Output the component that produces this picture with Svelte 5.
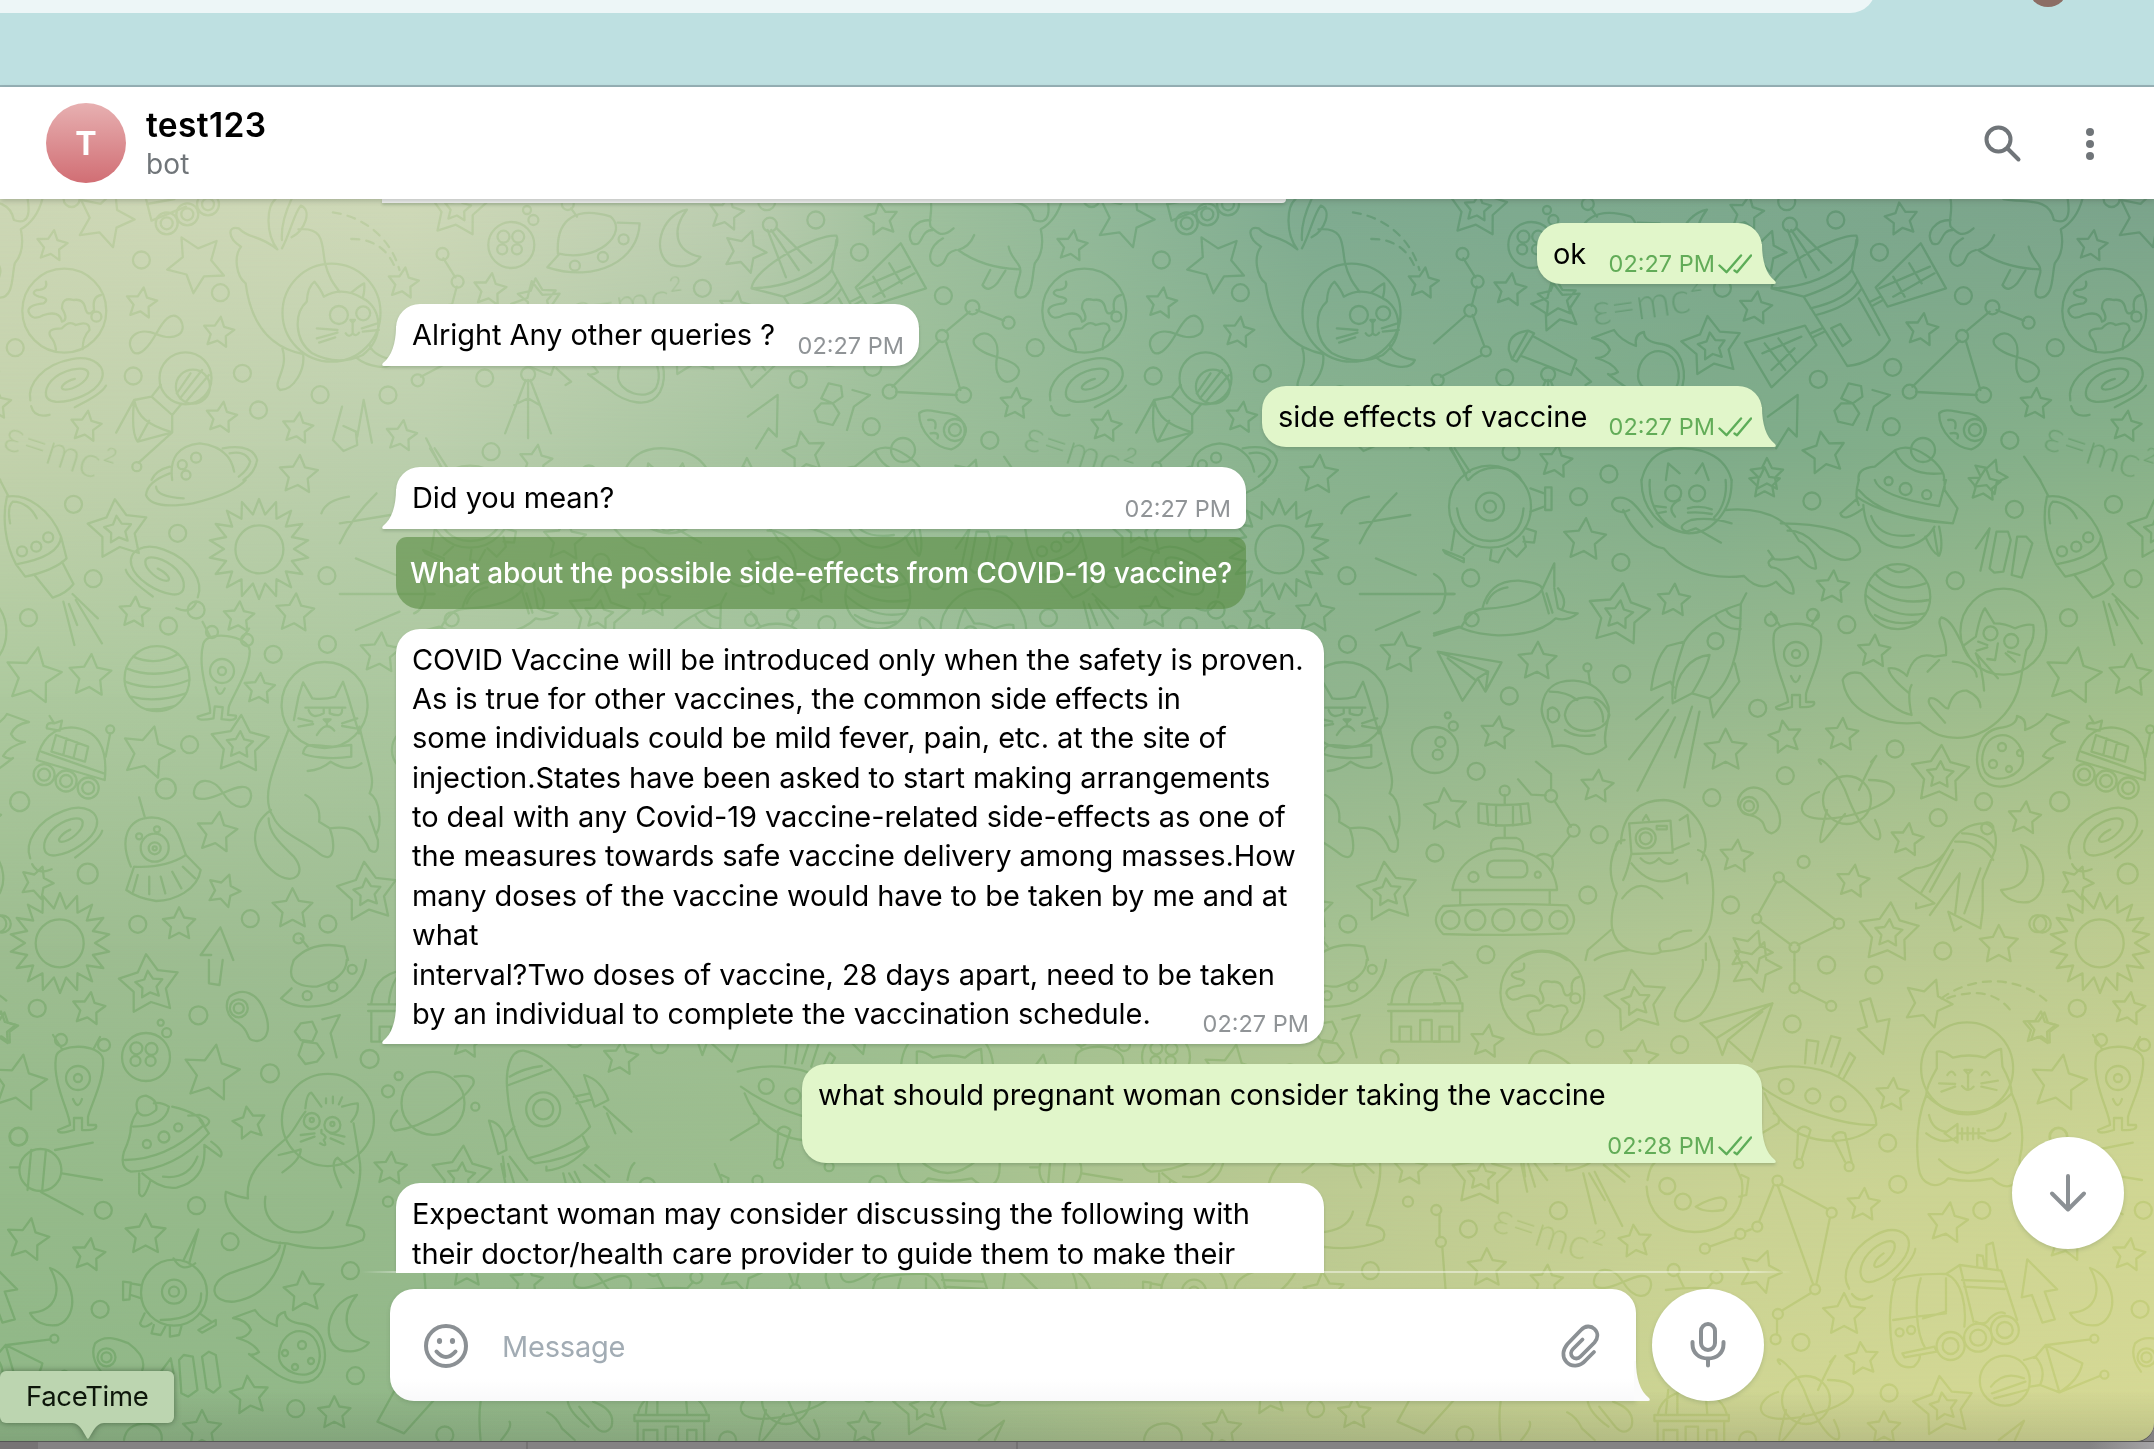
<script lang="ts">
  type Message = {
    kind: 'in' | 'out';
    size: string;
    time: string;
    lines: string[];
    action?: string;
    clipped?: boolean;
  };

  const messages: Message[] = [
    { kind: 'out', size: 'w-ok', time: '02:27 PM', lines: ['ok'] },
    { kind: 'in', size: 'w-alright', time: '02:27 PM', lines: ['Alright Any other queries ?'] },
    { kind: 'out', size: 'w-side', time: '02:27 PM', lines: ['side effects of vaccine'] },
    {
      kind: 'in',
      size: 'w-mean',
      time: '02:27 PM',
      lines: ['Did you mean?'],
      action: 'What about the possible side-effects from COVID-19 vaccine?'
    },
    {
      kind: 'in',
      size: 'w-wide',
      time: '02:27 PM',
      lines: [
        'COVID Vaccine will be introduced only when the safety is proven.',
        'As is true for other vaccines, the common side effects in',
        'some individuals could be mild fever, pain, etc. at the site of',
        'injection.States have been asked to start making arrangements',
        'to deal with any Covid-19 vaccine-related side-effects as one of',
        'the measures towards safe vaccine delivery among masses.How',
        'many doses of the vaccine would have to be taken by me and at',
        'what',
        'interval?Two doses of vaccine, 28 days apart, need to be taken',
        'by an individual to complete the vaccination schedule.'
      ]
    },
    { kind: 'out', size: 'w-pregnant', time: '02:28 PM', lines: ['what should pregnant woman consider taking the vaccine'] },
    {
      kind: 'in',
      size: 'w-wide',
      time: '',
      clipped: true,
      lines: [
        'Expectant woman may consider discussing the following with',
        'their doctor/health care provider to guide them to make their'
      ]
    }
  ];

  // ---- Wallpaper doodles: one tile, repeated every TILE pixels ----
  const TILE = 1020;
  const SX = 720 / 1568;
  const SY = 1 / 3;

  type Sheet = {
    x: number;
    y: number;
    circles: number[][];
    stars: number[][];
    doubles: number[][];
    paths: string;
    dashed?: string;
  };

  const sheets: Sheet[] = [
    {
      x: 0, y: 0,
      circles: [[156,597,8],[308,780],[480,878],[33,1043],[290,1128],[528,1120],[697,1184],[845,1185],[563,1230],[140,932,42],[210,950,5],[722,938,49],[738,945,9],[791,940,7],[363,670,11],[363,670,6],[408,643,11],[408,643,6],[453,613,11],[453,613,6],[404,1135,26],[420,1160,17],[298,1400,4.5],[1150,1123,7],[1252,797,5],[1313,771,5],[1358,718,5],[427,1373,5],[397,1394,4.5],[405,1425,4.5]],
      stars: [[113,738,16,8],[308,910,16,8],[476,998,16,8],[187,1280,16,8],[482,1253,16,8],[648,1285,16,8],[878,850,16,8],[874,1308,16,8],[650,1425,20,4],[228,655,30,20],[428,790,30,-30],[1170,895,20,-5]],
      doubles: [],
      paths: 'M318 597L330 662L405 620M320 612L380 597M600 597C580 620 578 700 604 748C560 700 545 720 520 685C495 675 495 715 525 740C508 770 515 830 535 850C545 960 580 1040 660 1062M655 617C640 640 632 700 614 745M655 617C680 630 665 690 635 712M635 597C620 640 612 680 614 720M650 688C710 680 700 740 708 790C715 830 725 850 740 876M615 1045C630 1110 590 1150 610 1170C640 1170 665 1110 660 1062M775 1072C800 1100 850 1115 860 1080C835 1075 810 1060 805 1035M668 905Q670 860 685 845Q700 870 705 890M765 878Q785 855 793 850Q795 870 790 895M668 905C640 940 640 1020 680 1060C720 1090 760 1085 790 1065C840 1010 830 920 790 895C760 870 730 870 705 890M763 960H773L768 968ZM768 968V1000Q760 1015 753 1000M768 1000Q775 1012 782 998M690 985L735 990M690 1015L735 998M695 1028L730 1012M788 985L822 970M790 995L825 990M350 1155L330 1190L292 1200L253 1298M395 1212L375 1245M330 1190L375 1245V1297L300 1325Q285 1300 292 1200M292 1200C300 1250 320 1275 375 1297M300 1325L325 1262M375 1297L302 1388M385 1180L415 1120M392 1195L440 1110M405 1205L455 1125M375 1440Q365 1340 435 1330Q500 1340 510 1415M330 1440Q340 1410 370 1400M485 1345Q550 1330 560 1380Q555 1420 530 1440M500 1360Q535 1350 545 1385Q540 1410 520 1430M745 1220L725 1320L748 1353L778 1335L775 1295L748 1278M792 1200L778 1310M792 1200L810 1328M928 1315L975 1440M1145 1140L1100 1300M1150 1140V1315M1155 1140L1200 1300M1120 1215L1150 1195L1175 1215M1215 760C1210 650 1260 620 1330 650C1370 700 1300 790 1215 760ZM1345 668L1393 670C1390 780 1300 850 1192 802L1218 762',
      dashed: 'M725 637C790 650 850 710 870 810M765 717C820 715 850 760 862 810'
    },
    {
      x: 0, y: 480,
      circles: [[160,73],[387,160],[203,296],[62,413],[427,390],[367,438],[712,287],[713,493],[595,523],[413,794],[361,926,10],[43,965,9.5],[191,1181,10],[300,1333],[545,1316],[714,1332],[5,1332],[565,208,24],[342,596,32.5],[105,172,5],[79,200,5],[48,214,5],[707,675,43],[240,748,4],[96,884,10.5],[96,884,6],[144,903,10.5],[144,903,6],[192,924,10.5],[192,924,6],[337,1103,14],[337,1105,6],[337,1105,2],[342,1048,3],[303,1069,3],[130,1390,24],[650,1375,5]],
      stars: [[293,398,16,4],[520,412,16,4],[642,400,20,4],[565,627,16,4],[72,588,29,10],[196,588,22,4],[322,818,27,14],[472,1058,21,8],[80,1208,17,20],[487,1232,17,20],[390,1333,17,0],[637,1288,21,0],[828,520,21,4]],
      doubles: [[257,150,31,-6],[522,795,30,3],[800,1238,31,-6]],
      paths: 'M15 50C60 40 110 90 133 170Q130 230 35 253C10 190 5 110 15 50ZM22 130Q15 80 28 65C50 65 70 85 80 115M0 0L18 48M133 170L145 235Q120 270 55 290L35 253M75 285L115 353Q145 340 160 312L135 245M138 365L162 495M165 360L222 490M150 372L168 435M158 342L213 415M290 530Q340 560 388 522M275 565Q340 600 408 560M272 605Q340 640 412 600M285 650Q340 670 405 640M320 688Q350 690 380 678M628 750C600 850 565 950 595 1010C610 1060 660 1080 690 1115Q720 1150 725 1110C728 1080 722 1060 718 1045C770 1035 790 1060 805 1110Q825 1130 823 1080L805 1010M783 740C800 850 820 900 805 940C830 960 830 1040 820 1060M665 945Q700 970 695 1025L718 1045M590 990C540 1040 545 1120 600 1180C640 1220 670 1180 640 1130C610 1090 585 1060 585 1015M640 720L650 650L660 607L680 655Q705 660 730 650L747 605L758 650L782 760M665 683H752M672 690Q680 720 705 700V685M718 685V700Q745 715 745 690M690 765Q710 720 728 752M712 720V735M705 718H720L712 728ZM650 715L680 725M650 740L682 732M745 730L778 715M745 738L775 745M660 820C665 780 690 800 730 800L765 795V830C720 840 670 830 660 820M670 873Q700 870 720 845Q760 880 787 850M80 840Q95 745 155 742Q240 750 228 900ZM90 815L226 880M122 765L192 800L185 845L112 815ZM145 775L138 825M168 787L160 835M108 708L118 730Q100 725 102 745L130 752L135 722L118 730M230 830L240 760M285 1160C260 1080 275 1015 330 1012C390 1015 390 1080 405 1125L437 1170C430 1230 380 1262 340 1263Q300 1255 275 1230L292 1160Q360 1165 405 1125M315 1010L303 952M300 1185L290 1235M325 1190V1243M350 1190L360 1240M375 1175L395 1225M398 1160L425 1195M437 1425L480 1342L508 1440M437 1425H460M640 1440Q680 1380 750 1400L758 1440M318 45C320 10 350 -10 370 -20M318 45Q330 90 420 70Q510 40 535 0M340 20Q340 50 400 55M740 190C760 130 790 80 820 40M700 100Q710 60 760 50M740 130L850 105M775 235L862 285M740 342H945M775 450L870 395M655 1375L670 1400'
    },
    {
      x: 0, y: 960,
      circles: [[81,145],[432,166,9],[588,340,9],[805,297,9],[40,530,9],[225,751],[428,737],[501,845],[218,1048],[763,932],[774,1247],[644,1346],[350,188,3],[363,218,4.5],[845,394,6],[868,348,4],[1035,440,4],[845,725,5],[318,291,24],[297,265,6],[330,267,6],[295,303,5],[328,303,5],[520,145,9],[520,145,5],[669,107,4.5],[725,80,4.5],[767,28,4.5],[320,552,4],[357,531,5.5],[388,502,4],[88,630,21],[714,480,46],[679,483,8],[679,480,2],[724,495,8],[724,492,2],[943,430,31.5],[1183,448,17],[1183,448,10],[379,998,33],[379,995,12],[379,995,5],[232,1192,9],[232,1192,5]],
      stars: [[193,147,17,8],[5,205,16,8],[40,370,29,10],[460,340,29,10],[543,490,17,-10],[850,627,17,4],[60,840,22,10],[317,825,21,0],[193,885,17,8],[662,997,21,-4],[543,1307,20,-6],[728,1360,17,0],[440,1410,20,0]],
      doubles: [[325,75,31,-6]],
      paths: 'M455 0V70L478 75L485 0M655 190L680 185L690 215L680 245L655 240L642 215ZM660 245L690 250L705 280L690 305L665 312L650 285ZM702 178L740 165L720 220L733 292M500 110C530 80 560 100 575 150C590 200 585 240 560 243C530 240 550 220 520 190C490 170 490 130 500 110ZM640 0C625 50 635 80 690 80C740 60 755 30 755 0M635 85L612 115Q650 155 720 130Q790 90 797 0M270 575C280 545 285 520 285 500Q290 470 300 455M375 440Q440 460 445 500Q470 480 435 465L410 467M270 575Q260 625 285 635Q380 630 455 520L435 480M272 600Q360 600 440 500M290 500Q360 500 368 440Q350 425 335 430M300 455Q290 410 318 407Q345 420 340 450Q315 480 300 455M310 640Q350 690 385 683Q450 660 445 560M355 650Q410 660 430 590M303 640V700Q312 730 328 660M445 555L480 590Q490 575 460 545M68 570L60 690M100 570L92 690M22 622H40M120 570L202 548M135 640L222 660M90 697L180 763M665 455C640 500 640 520 615 545C560 610 535 650 540 715Q515 710 492 695C485 740 510 780 540 810C580 850 610 850 625 850C680 870 740 870 790 840Q805 800 755 795C775 720 790 650 783 600L770 490M610 848C610 900 560 910 500 940C450 970 460 1030 510 1025C580 1010 610 930 622 850M578 710C570 780 610 820 655 817Q715 810 725 755M607 585Q640 575 655 568Q655 600 615 637M770 638Q740 600 735 593Q715 610 743 682M665 445Q668 400 678 398L700 440M745 440Q770 430 779 430Q782 460 765 485M710 430V415M725 430V410M738 433L745 412M700 510V520Q715 530 705 540Q715 565 697 550M655 525L685 520M655 545L685 530M750 530L720 520M748 552L720 535M990 350Q1040 340 1030 375C1010 420 930 500 860 512Q840 490 865 452M1105 395C1100 330 1110 270 1140 272C1200 290 1250 380 1285 500Q1250 560 1150 595C1120 530 1108 450 1105 395M1108 375L1200 328M1110 350Q1140 325 1180 318M1250 410L1285 400M1272 345Q1310 360 1325 420L1295 440ZM1255 430L1290 418M1100 530L1120 500M1065 482Q1100 490 1103 570L1085 582ZM1150 595L1165 610Q1230 600 1280 560L1270 530M1190 620V632Q1240 625 1282 560M1315 440L1375 515M1322 460L1340 520M1095 590L1100 650M1110 590L1148 660M400 900L432 808L412 910M378 895Q395 940 425 910M305 975L285 970M308 1015L285 1005M268 965L285 968L282 1018L268 1020ZM315 1060L305 1090Q310 1110 330 1090M335 1095L330 1120L350 1125L360 1100M370 1100V1130L390 1125L395 1100M435 1060L460 1085M432 1110L470 1080V1095L440 1118ZM350 1080Q440 1080 438 1000M207 1150C230 1120 260 1140 280 1150Q320 1190 310 1230M207 1150Q195 1190 220 1235M390 1200L400 1185L420 1190L430 1290L410 1310L395 1300ZM440 1190L455 1175L470 1185L480 1280L465 1298L450 1285ZM345 1245L372 1195L378 1240M860 1290L822 1385L880 1420L945 1320M270 1440Q275 1390 320 1390Q355 1400 352 1440'
    },
    {
      x: 414, y: 0,
      circles: [[246,630,4],[260,660,5],[212,735,23],[195,710,6],[227,710,6],[192,748,5],[224,748,5],[62,762,6],[95,845,6],[79,932,6],[113,1054,5],[8,1141,6],[154,1134],[335,612,6],[768,605],[875,660],[775,674,7],[970,757],[1153,887],[628,865],[1216,922,7],[1295,968,6],[1150,1008,6],[999,1102],[837,1138],[1036,1175,7],[1197,1185,7.5],[996,1280],[1254,1321],[168,1355],[381,1422],[1178,1290,6],[1178,1290,11],[1065,1350,12]],
      stars: [[1018,658,17,-8],[165,870,17,8],[268,920,26,-12],[700,925,17,8],[1062,990,17,8],[1310,1212,16,4],[265,1385,17,8],[850,1360,22,-10],[725,1425,17,0],[1210,1430,18,20],[680,640,18,10],[720,755,22,20]],
      doubles: [[605,1040,31,-8],[95,625,30,6]],
      paths: 'M64 775L90 832M93 860L82 918M70 945L0 1030M84 945L110 1040M105 1065L15 1130M1210 935L1158 995M1225 930L1285 962M1145 1022L1042 1160M1158 1022L1190 1170M1050 1176L1182 1185M735 865C740 800 880 700 920 707C935 760 860 860 735 865ZM735 865L805 890Q890 850 910 810L920 720M805 890L900 1098Q960 1090 993 1020L910 810M820 925Q900 900 922 845M832 945Q905 920 930 868M770 690L810 832M778 690L838 810M790 685L865 788M677 1028L808 977L833 1035L735 1162ZM962 862L1060 730L1115 865L988 920ZM820 1000L845 985M825 1012L850 995M950 905L972 890M955 917L978 900M865 985L885 972L908 1020L890 1038ZM925 895L970 1005M715 1060L800 1010M735 1110L785 1045M720 1030L765 1110M750 1015L790 1090M970 865L1080 800M1000 890L1090 820M1000 830L1025 890M1035 790L1062 850M903 1150L930 1158L933 1190L912 1210L887 1195ZM887 1210L912 1210L926 1240L912 1275L880 1265L872 1232ZM955 1170L993 1185L958 1220L943 1290M1100 1240C1115 1220 1140 1240 1165 1240C1210 1250 1210 1330 1170 1348C1140 1345 1100 1300 1100 1240ZM1120 1260Q1140 1255 1135 1285M1125 1300Q1145 1295 1140 1315M1125 597C1130 640 1120 660 1125 680C1140 700 1150 715 1175 685M1125 660C1090 660 1070 700 1085 730C1110 745 1100 690 1130 690M1152 715C1120 740 1115 790 1140 798C1165 790 1150 760 1180 750M1220 705Q1210 740 1185 750Q1240 805 1320 808M1255 810L1238 855Q1250 880 1270 850L1288 812M1295 740C1300 780 1325 790 1320 820C1315 850 1300 890 1320 893C1350 890 1345 830 1352 790C1370 760 1370 720 1365 688Q1400 660 1412 597M1240 597C1290 610 1340 590 1350 660Q1390 680 1380 597M205 992L218 1000L180 1085L170 1078ZM205 992Q160 1000 163 1050L170 1078M218 1010L310 1080L298 1125L190 1068M310 1105L342 1145L330 1155M925 1440Q920 1405 960 1400L1005 1350Q1040 1325 1090 1385Q1115 1420 1110 1440M1005 1355Q1030 1430 1105 1420M452 1440Q470 1340 545 1345Q630 1350 648 1440M505 1440L510 1390L535 1420M570 1420L585 1390L598 1440M727 1250L792 1185L790 1310L772 1285L745 1345M75 1440Q100 1400 140 1403Q180 1410 190 1440M35 1345L70 1425M45 1345L78 1415M1285 1370L1320 1440M342 625L355 650'
    },
    {
      x: 414, y: 480,
      circles: [[122,80,41],[122,80,14],[122,80,6],[315,50],[407,247],[80,294],[823,63],[1264,88],[1135,302],[899,434],[409,582],[164,648],[92,874],[705,685],[765,887],[605,953],[1004,807],[1098,1013],[1197,965],[360,1064],[805,1146,6],[646,1275],[335,1245],[1315,1331],[1108,1413],[113,1424],[30,706,3],[42,738,4.5],[2,810,23],[14,786,5],[8,824,5],[1010,350,32.5],[334,562,4],[613,483,8],[154,932,5],[255,948,6],[304,1052,6],[86,1191,5],[226,1184,3],[751,1192,5],[703,1316,4.5],[882,1331,5],[785,1402,5],[1240,455,43],[2,1119],[36,1320,9],[90,1320,10],[151,1320,11],[213,1320,10],[271,1320,9],[521,40,8],[573,40,8],[1027,27,6],[1073,44,4.5],[990,3,4],[82,418,7],[1212,460,7],[1257,483,7],[686,978,9],[686,978,5],[461,1075,10],[461,1075,6],[1205,1045,6]],
      stars: [[328,180,22,4],[720,10,16,0],[868,322,17,4],[522,362,17,4],[225,545,20,2],[958,515,17,4],[137,760,17,8],[635,812,22,0],[765,772,17,-10],[888,765,17,4],[355,920,17,6],[25,990,22,-4],[658,1130,17,6],[912,1205,17,8],[1030,1080,17,8],[1286,1015,17,6],[1230,1395,20,0],[690,1415,22,20],[1198,15,17,6]],
      doubles: [[402,405,32,8],[1102,885,30,3],[990,1360,31,4]],
      paths: 'M40 1230C50 1140 110 1105 155 1105C220 1110 265 1160 268 1230ZM57 1235V1275M252 1235V1270M20 1278Q150 1268 290 1276Q320 1320 290 1360Q150 1368 20 1362Q-12 1320 20 1278ZM125 1108Q120 1075 140 1074H180Q195 1080 194 1108M154 1072V1040M154 945V975M97 970Q150 980 205 970L210 1028Q150 1045 97 1028ZM115 975L118 1035M135 978V1038M172 978V1038M188 975L192 1033M130 1142H190Q205 1145 203 1175Q200 1192 190 1192H130Q115 1190 116 1165Q116 1145 130 1142ZM222 845L255 882V930M183 898L212 944L243 946M262 962L298 1040M296 1068L258 1130M225 1128Q240 1115 256 1130Q262 1150 256 1170M50 85Q60 180 122 183Q190 180 195 85M452 0C450 80 490 150 555 160C600 160 650 100 648 0M470 0C465 80 500 150 550 158M635 0C640 60 620 100 610 112M425 90C400 110 375 75 395 55C430 40 450 100 475 140M412 90C430 150 470 200 500 205C540 270 600 300 675 288Q710 340 745 305Q770 345 783 340C785 300 750 260 735 262Q720 245 740 235L728 212M735 235Q760 245 793 230Q820 270 832 265C830 220 810 190 795 183C770 120 720 80 635 90M648 130Q600 110 560 120Q525 140 550 155L570 145L625 188M755 130C830 130 930 150 928 215C900 270 850 220 830 190Q800 150 770 152M535 60Q505 80 525 110M480 78L505 82M485 100L505 95M553 85Q580 75 605 88M553 98Q580 95 605 102M925 0Q915 50 925 75M925 30Q980 120 1130 130L1140 85L1112 30V0M920 50Q980 110 1130 130M960 0Q970 50 1100 78L1115 0M935 75C940 170 980 205 1020 203Q1070 190 1090 140M952 108Q970 180 1045 165M922 55L885 100Q890 130 935 85M1070 170Q1085 220 1100 227Q1110 200 1100 140M1088 145L1098 227M210 25L240 40M210 95L240 80M242 22H256V90H242ZM45 150L38 210M20 210L65 235V247L25 220ZM85 200L65 225M125 210L122 240L140 247L155 210M160 205L180 230L200 200L195 170M200 145L222 155L218 188L195 185M0 467L60 440Q80 390 105 387Q120 300 185 302Q240 310 235 330Q210 380 105 387M235 330L262 250V320M235 330L250 400M262 325L270 385Q290 400 313 400Q290 425 265 415Q230 465 140 466Q80 460 55 440L0 460M115 370Q125 330 160 322M270 325Q290 360 280 385M245 340L258 398M0 282Q25 300 25 342Q20 390 0 400M25 342H45M985 260Q1010 290 1035 265M960 280Q1000 345 1070 310M945 310Q1000 380 1078 360M940 345Q1000 420 1070 400M960 405Q1000 440 1050 425M1210 265L1225 155L1250 155L1256 180L1240 275L1220 278ZM1258 285L1270 170L1290 170L1303 190L1280 293ZM1180 205L1210 145L1190 272M668 372C600 400 560 450 545 485C530 550 515 600 520 670L562 640L600 655C640 620 670 520 668 372ZM668 372L680 340M612 405Q630 450 668 447M635 388Q645 415 668 415M545 485L508 498Q480 540 473 630L515 605L522 622M655 550L665 605L608 712L600 655M562 640C580 600 595 560 600 525C560 530 525 580 525 655M498 652L440 718M510 690L425 838M525 712L443 932M562 680L525 832M578 695L545 922M8 515L147 547L112 635L95 595L62 662ZM8 515L118 575L95 595M30 535L90 600M118 575L112 635M258 800C260 750 230 720 235 680C240 620 270 600 305 602C350 605 370 640 380 680C385 720 365 760 375 800Q340 840 310 808Q285 790 258 800ZM252 635Q290 635 312 660M285 705Q290 655 330 652Q370 650 382 705Q375 750 330 753Q290 750 285 705ZM285 750Q310 775 350 765M336 575L340 610M350 665Q370 690 368 725M248 690Q258 675 268 690Q278 705 268 722Q255 735 248 715ZM1155 495L1180 470Q1190 400 1200 385L1220 430Q1245 430 1265 445Q1290 430 1305 435Q1310 480 1290 510L1280 580C1270 700 1200 780 1130 773C1090 770 1070 740 1058 728C980 740 900 700 890 600Q900 570 930 580C970 630 990 690 1040 705Q1030 640 1040 615M1035 640Q990 590 990 565Q1010 560 1030 588Q1045 510 1090 530L1115 525C1120 470 1090 430 1105 412C1130 420 1140 470 1165 530M1100 540L1075 575M1130 545Q1180 550 1182 590M1180 520Q1195 570 1198 632M1180 520L1228 595M1113 728C1090 690 1070 670 1080 655C1100 650 1110 690 1120 685Q1130 630 1160 632Q1190 650 1190 682M1228 490L1222 540L1205 537M1185 485L1205 495M1182 512L1205 502M1245 520L1265 545M1250 515L1275 525M670 940C690 910 720 920 735 960C760 1000 760 1050 735 1060C710 1050 730 1030 700 1010C660 1000 655 965 670 940ZM407 1090C410 1000 450 960 500 960C560 965 600 1050 590 1110L583 1140M425 1030L515 1022L520 1118L430 1122ZM455 1020L462 1005L468 1020M535 1020L552 1005L558 1070M485 1038H507V1048H485ZM400 1090C380 1140 380 1190 398 1240C380 1320 380 1380 425 1410Q480 1430 495 1415C550 1410 600 1390 605 1300C615 1200 600 1120 575 1110M415 1080Q395 1080 395 1110M430 1120Q420 1180 412 1200M520 1110L555 1090M430 1150Q480 1240 550 1180L552 1210M450 1135Q470 1165 490 1135Q510 1165 530 1140M410 1255Q450 1180 497 1255M385 1350L335 1410L330 1440M425 1410Q370 1420 350 1440M495 1415Q480 1380 515 1375Q530 1350 560 1352M600 1370L618 1440M592 1390V1440M746 1205L706 1303M760 1200L875 1320M710 1325L778 1395M873 1340L792 1395M785 1415V1440M1125 1090Q1150 1030 1200 1030Q1230 1040 1222 1110L1195 1200V1290L1190 1345L1120 1295L1133 1352L1148 1340M1125 1090L1060 1240M1125 1090Q1100 1160 1050 1165L1012 1195L1090 1270L1050 1285V1270M1080 1305L1145 1180L1135 1300M1135 1085Q1190 1080 1218 1140M1150 1060Q1200 1060 1222 1110M1080 1235L1130 1110M1190 1165L1155 1300M180 1440Q235 1390 290 1440'
    },
    {
      x: 414, y: 960,
      circles: [[855,15],[958,45],[785,84,5],[865,138,5],[350,236],[535,254],[780,192],[988,549],[1010,673],[75,807],[271,752],[1193,751],[5,750,5],[15,846,5],[748,662,5],[866,758,5],[704,800,5],[667,822,5],[590,866,5],[830,988,5],[749,1062,5],[744,1138,5],[799,1147],[1360,530],[991,1299],[67,1425],[236,98,42],[308,115,5],[767,379,7.5],[825,408,7.5],[880,432,7.5],[794,611,4.5],[904,620,4.5],[1161,325,46],[508,678,8],[542,725,8],[1125,1158,14],[1125,1158,8],[1185,1133,14],[1185,1133,8],[1243,1110,14],[1243,1110,8],[1014,1117,4],[1039,1110,4],[1438,1136,4],[1460,1244,4],[683,1440],[1243,1262,25],[522,930,6],[615,952,6]],
      stars: [[115,245,17,8],[450,295,18,6],[1075,130,25,20],[1318,205,17,6],[998,405,17,4],[935,735,17,4],[1118,790,21,8],[438,845,17,-6],[115,925,20,0],[245,965,17,4],[710,935,22,20],[893,1065,22,0],[932,1197,17,-6],[980,1405,17,0],[700,20,26,20]],
      doubles: [[440,125,32,-8],[103,650,31,4],[1110,1340,31,-8]],
      paths: 'M785 0V70M797 90L855 130M740 675L708 785M755 672L858 748M748 675L825 970M862 775L833 970M820 1000L760 1050M747 1078V1122M690 808L678 815M657 832L600 860M12 765V830M18 860L25 985M585 0C595 60 520 120 525 170Q540 200 580 165C610 120 625 60 620 0M580 190L737 130L692 305L640 240L628 285L615 235ZM737 130L615 235M715 155L640 240M640 240L628 285M705 335C760 310 830 315 880 350C930 390 965 450 963 495C900 500 780 450 712 380M720 400Q760 540 870 543Q930 540 963 495M808 310L812 240L837 245L830 310M845 310L865 228L885 235L865 320M880 350L905 278L917 293L890 360M790 598L793 510Q805 490 820 510L800 600M895 605L868 530Q880 510 895 520L910 608M740 460Q755 465 750 490L690 540M928 125L950 115L965 185L992 177L978 282L923 208L943 200ZM1292 898L1357 988L1330 995L1352 1078L1325 1088L1302 1005L1280 1012ZM1072 405C1050 480 1050 560 1055 620C1060 680 1100 690 1120 655Q1165 670 1215 655C1250 700 1280 680 1275 600C1290 520 1275 450 1258 400M1072 405C1120 475 1210 475 1258 400M1095 325V275Q1110 270 1130 293Q1165 280 1200 293Q1220 270 1235 267L1238 320M1095 325Q1072 380 1072 405M1238 320Q1258 370 1258 400M1118 345Q1127 325 1135 345M1193 345Q1202 325 1210 345M1155 330H1172L1163 342ZM1163 342V385M1150 378Q1163 400 1175 380M1100 370L1135 372M1105 395L1135 380M1192 370L1228 362M1192 380L1225 390M1078 465Q1085 510 1115 515M1245 460Q1240 510 1205 512M1072 520Q1110 560 1140 530M1255 520Q1220 560 1190 530M1112 520L1140 492V548ZM1140 520H1200M1150 505V538M1162 503V540M1174 505V538M1186 507V535M1100 598Q1160 680 1228 598M465 660Q470 620 480 609M463 680C465 760 510 815 567 816C640 815 680 750 670 660L655 612M670 645L685 655L680 705L665 710M570 740Q590 760 630 750Q645 720 625 712Q600 715 570 740M1005 960Q1040 940 1115 942C1150 960 1160 1040 1155 1100M1005 960C990 1020 990 1110 1000 1180M1115 942L1145 915L1235 932L1270 1080M1000 1080L1050 1070L1115 1060M1060 955C1045 1020 1050 1120 1070 1165M1115 955L1115 1055L1065 1075M1145 915L1175 1085M1150 960L1240 965M1155 980L1243 987M1183 920V885L1195 888L1200 925M1203 925V855L1217 848L1228 930M1020 1180L1090 1160L1095 1175L1025 1192ZM1000 1180Q1010 1230 1045 1220Q1060 1200 1058 1185M1180 1085Q1200 1100 1210 1075Q1230 1050 1243 1060M1213 1280Q1240 1230 1285 1255M1215 1300L1288 1265M1220 1315L1290 1290M1285 1200L1310 1190L1332 1155L1412 1210Q1405 1260 1362 1297L1320 1275L1298 1280M1332 1155L1362 1297M1335 1155L1430 1138M1362 1297L1450 1248M1310 1190Q1335 1230 1320 1275M488 1360C500 1270 620 1270 637 1360M480 1365H642V1383H480ZM487 1385V1440M632 1385V1440M505 1360L510 1290M530 1360V1275M595 1360L590 1275M500 1440V1410H530V1440M548 1440V1400H575V1440M595 1440V1410H615V1440M0 40Q50 50 58 130M0 130H62V153H0M55 155V245H0M12 245V200H40V245M20 15L40 5L72 50L50 60M5 50L25 130M530 943L545 985M608 965L595 985M505 990Q560 980 595 985M190 612L203 695M205 612L220 680M325 640L352 790M338 640L372 720M350 635L410 798M370 615L415 665M395 615L425 650M145 1440Q140 1370 145 1325M208 1385Q215 1400 190 1440M335 1325Q340 1360 380 1400M390 1325Q440 1350 430 1400Q415 1430 395 1400L360 1340M290 1357Q310 1370 322 1405L350 1440M1230 1440L1285 1382L1265 1440',
      dashed: 'M1105 115C1180 40 1280 50 1340 130M1118 115C1170 90 1220 90 1255 150'
    },
    {
      x: -300, y: 960,
      circles: [],
      stars: [],
      doubles: [],
      paths: 'M1568 30Q1470 20 1462 130M1455 133H1568M1455 153H1568M1462 155V245H1568M1480 245V200H1505V245M1525 245V180H1550V245M1500 130Q1505 60 1530 35'
    }
  ];

  const GLOBE = 'M100 845Q105 870 80 870Q65 880 85 890Q110 895 95 910Q60 915 62 935Q70 965 95 945Q130 930 135 965Q150 960 135 925Q135 890 160 900Q180 895 185 920Q190 955 205 930Q200 890 220 885M122 1050Q120 1025 110 1010Q100 985 135 985Q150 960 165 975Q195 960 195 990Q180 1010 180 1048';
  const GALAXY = 'M-39 14C-40 -2 -22 -20 8 -21C30 -22 42 -8 34 4C26 16 2 22 -14 19C-28 16 -24 2 -10 -6C4 -13 24 -12 22 -4C20 4 4 10 -4 8C-10 6 -2 0 8 -1M-39 20C-38 28 -32 32 -22 31M38 10C34 16 20 22 4 27';
  const LOOP = 'M-28 8C-32 -8 -14 -14 0 0C14 14 30 12 28 -4C24 -18 10 -8 0 0C-10 8 -24 16 -28 8Z';
  const MOON = 'M-2 -29C24 -20 28 20 6 28C-8 30 -18 24 -22 16C6 14 10 -8 -2 -29Z';
  const ALIEN = 'M-22 -30C-20 -44 22 -44 25 -28C27 -8 12 20 10 30V38H18Q20 44 4 43V31H-4V43Q-20 48 -20 43L-8 38C-8 26 -26 -4 -22 -30ZM-16 -38L-25 -52M16 -39L22 -50M-5 12Q0 24 4 12';
  const METEOR = 'M-22 16C-30 0 -26 -28 -4 -32Q14 -34 14 -44Q24 -42 22 -30Q38 -36 44 -46Q50 -44 66 -38Q52 -36 48 -26Q52 -18 62 -18Q46 -14 40 -4Q46 0 50 -2Q40 6 28 14C14 26 -12 34 -22 16ZM-18 12C-24 0 -20 -20 -6 -24C8 -28 20 -16 20 0C20 16 -8 26 -18 12Z';
  const ATOM = 'M-26 -36C-36 -48 -10 -36 2 0C20 44 44 52 28 20M-20 10C-34 60 -26 44 -2 14M12 -10C30 -50 34 -48 24 -38M22 -20C60 -20 56 4 0 16C-60 28 -50 -2 -28 -8';

  const motifs: { d: string; x: number; y: number; turn: number; flip?: number }[] = [
    { d: GALAXY, x: 67, y: 381, turn: -8 },
    { d: GALAXY, x: 165, y: 572, turn: 18, flip: -1 },
    { d: GALAXY, x: 63, y: 833, turn: -18 },
    { d: GALAXY, x: 857, y: 1258, turn: -28 },
    { d: LOOP, x: 156, y: 334, turn: -22 },
    { d: LOOP, x: 223, y: 793, turn: 14 },
    { d: LOOP, x: 997, y: 357, turn: 55 },
    { d: LOOP, x: 603, y: 1282, turn: 14 },
    { d: MOON, x: 52, y: 1297, turn: 0 },
    { d: MOON, x: 350, y: 1323, turn: 10, flip: -1 },
    { d: MOON, x: 1003, y: 874, turn: 0 },
    { d: MOON, x: 681, y: 238, turn: 8, flip: -1 },
    { d: ALIEN, x: 222, y: 676, turn: 6 },
    { d: ALIEN, x: 78, y: 1087, turn: 0 },
    { d: ALIEN, x: 776, y: 664, turn: 0 },
    { d: METEOR, x: 983, y: 760, turn: 0 },
    { d: METEOR, x: 299, y: 1356, turn: 0, flip: -1 },
    { d: METEOR, x: 638, y: 376, turn: 0, flip: -1 },
    { d: ATOM, x: 827, y: 800, turn: 0 },
    { d: ATOM, x: 786, y: 1400, turn: 0 }
  ];

  const formulas = [
    { x: 55, y: 466, turn: 18 },
    { x: 630, y: 318, turn: -8 },
    { x: 524, y: 1248, turn: 18 }
  ];

  function ring(cx: number, cy: number, r = 8.5): string {
    return `M${(cx - r).toFixed(1)} ${cy.toFixed(1)}a${r} ${r} 0 1 0 ${2 * r} 0a${r} ${r} 0 1 0 ${-2 * r} 0`;
  }

  function spikes(cx: number, cy: number, outer: number, inner: number, count: number, turn: number): string {
    let d = '';
    for (let i = 0; i < count * 2; i++) {
      const r = i % 2 ? inner : outer;
      const a = ((turn - 90) * Math.PI) / 180 + (i * Math.PI) / count;
      d += (i ? 'L' : 'M') + (cx + r * Math.cos(a)).toFixed(1) + ' ' + (cy + r * Math.sin(a)).toFixed(1);
    }
    return d + 'Z';
  }

  function outline(s: Sheet): string {
    let d = '';
    const at = (p: number[]) => [s.x + p[0] * SX, s.y + p[1] * SY];
    for (const c of s.circles) {
      const [x, y] = at(c);
      d += ring(x, y, c[2]);
    }
    for (const c of s.stars) {
      const [x, y] = at(c);
      d += spikes(x, y, c[2], c[2] * 0.5, 5, c[3]);
    }
    for (const c of s.doubles) {
      const [x, y] = at(c);
      d += spikes(x, y, c[2], c[2] * 0.55, 5, c[3]) + spikes(x, y, c[2] * 0.46, c[2] * 0.24, 5, c[3]);
    }
    return d;
  }

  const shapes =
    sheets.map(outline).join('') +
    spikes(259, 549, 50, 35, 18, 0) +
    spikes(60, 943, 50, 35, 18, 0) +
    ring(827, 800, 24) +
    ring(786, 1400, 24) +
    ring(222, 671, 12) + ring(222, 671, 4) + ring(212, 632, 6) + ring(247, 640, 6) +
    ring(78, 1078, 12) + ring(78, 1078, 4) + ring(61, 1040, 6) + ring(104, 1045, 6) +
    ring(776, 654, 12) + ring(776, 654, 4) + ring(751, 620, 6) + ring(793, 615, 6) +
    ring(982, 747, 4) + ring(1000, 753, 3) + ring(973, 764, 4) + ring(989, 769, 3) +
    ring(302, 1345, 4) + ring(285, 1353, 3) + ring(311, 1361, 3) + ring(295, 1367, 3);
</script>

<svelte:head><title>test123</title></svelte:head>

<div class="screen">
  <div class="browser">
    <div class="address"></div>
    <div class="profile"></div>
  </div>

  <header>
    <div class="avatar">T</div>
    <div class="who">
      <div class="name">test123</div>
      <div class="status">bot</div>
    </div>
    <svg class="search" viewBox="0 0 40 40"><circle cx="15.500" cy="15.500" r="12" /><path d="M24.500 24.500L35.500 35.500" /></svg>
    <svg class="more" viewBox="0 0 10 40"><circle cx="5" cy="8" r="4" /><circle cx="5" cy="20" r="4" /><circle cx="5" cy="32" r="4" /></svg>
  </header>

  <main>
    <div class="wallpaper">
      <div class="band b0"></div>
      <div class="band b1"></div>
      <div class="band b2"></div>
      <div class="band b3"></div>
      <div class="band b4"></div>
      <div class="band b5"></div>
      <svg class="doodles" viewBox="0 199 2154 1242">
        <defs>
          <g id="tile">
            <path d={shapes} />
            {#each sheets as s}
              <g transform="translate({s.x} {s.y}) scale({SX} {SY})">
                <path d={s.paths} />
                {#if s.dashed}<path class="dashed" d={s.dashed} />{/if}
              </g>
            {/each}
            <path d={GLOBE} transform="scale({SX} {SY})" />
            <path d={GLOBE} transform="translate(458 682) scale({SX} {SY})" />
            {#each motifs as m}
              <path d={m.d} transform="translate({m.x} {m.y}) rotate({m.turn}) scale({m.flip ?? 1} 1)" />
            {/each}
            {#each formulas as f}
              <text transform="translate({f.x} {f.y}) rotate({f.turn})">ε=mc²</text>
            {/each}
          </g>
        </defs>
        {#each [-1, 0, 1, 2] as n}
          <use href="#tile" x={n * TILE} />
        {/each}
      </svg>
    </div>

    <div class="list">
      <div class="previous"></div>
      {#each messages as m}
        <div class="row {m.kind}">
          <div class="bubble {m.size}" class:with-action={m.action} class:clipped={m.clipped}>
            <div class="text">
              {#each m.lines as line}<div>{line}</div>{/each}
            </div>
            {#if m.time}
              <div class="meta">
                <span>{m.time}</span>
                {#if m.kind === 'out'}
                  <svg class="ticks" viewBox="0 0 34 20"><path d="M1.500 11.500L8.500 18.200L23 1.500M16.500 16.500L19 18.200L33 1.500" /></svg>
                {/if}
              </div>
            {/if}
            {#if !m.clipped}
              <svg class="tail" viewBox="0 0 16 40"><path d="M16 0H14C14 17 10 30 1 37Q-1 40 2 40H16Z" /></svg>
            {/if}
          </div>
          {#if m.action}<div class="action"><span>{m.action}</span></div>{/if}
        </div>
      {/each}
    </div>

    <div class="divider"></div>

    <div class="composer">
      <div class="field">
        <svg class="smile" viewBox="0 0 44 44">
          <circle class="line" cx="22" cy="22" r="20" />
          <ellipse cx="15.500" cy="17" rx="2.600" ry="3" /><ellipse cx="28.500" cy="17" rx="2.600" ry="3" />
          <path class="line" d="M12.500 27.500Q22 38.500 31.500 27.500" />
        </svg>
        <span class="placeholder">Message</span>
        <svg class="clip" viewBox="0 0 40 44">
          <path d="M34 28L25.500 36.500C20 43 11 43 6.500 38C2 33 2.500 26 7.500 20L21 6C25 1.500 31 1.500 34.500 5C38.500 9 38 14.500 34.500 18.500L20.500 32.500C18 35.200 14.500 35 12.500 33C10.500 31 10.500 27.500 13 25L22.500 15.500" />
        </svg>
        <svg class="tail" viewBox="0 0 16 40"><path d="M16 0H14C14 17 10 30 1 37Q-1 40 2 40H16Z" /></svg>
      </div>
      <div class="round">
        <svg class="mic" viewBox="0 0 36 46"><rect x="11" y="2" width="14" height="26" rx="7" /><path d="M2.500 20V22C2.500 31 9 36.500 18 36.500S33.500 31 33.500 22V20M18 37V43.500" /></svg>
      </div>
    </div>

    <div class="round jump">
      <svg class="down" viewBox="0 0 40 40"><path d="M20 3V36M4 20.500L20 36.500L36 20.500" /></svg>
    </div>
    <div class="tooltip">FaceTime<svg viewBox="0 0 32 17"><path d="M0 0C9 0 12 12 16 16C20 12 23 0 32 0Z" /></svg></div>
  </main>
  <div class="dock"></div>
</div>

<style>
  :global(body) { margin: 0; background: #858383; }
  .screen {
    width: 2154px;
    height: 1449px;
    overflow: hidden;
    display: flex;
    flex-direction: column;
    font-family: Inter, 'Liberation Sans', sans-serif;
    background: #848283;
  }
  .browser {
    box-sizing: border-box;
    height: 87px;
    flex: none;
    display: flex;
    align-items: flex-start;
    background: #bee0e1;
    border-bottom: 2px solid #97b2b7;
    overflow: hidden;
  }
  .address { width: 1876px; height: 40px; margin-top: -27px; background: #edf6f7; border-radius: 0 0 26px 0; }
  .profile { width: 40px; height: 40px; margin: -33px 0 0 152px; border-radius: 50%; background: #8c6e65; }
  header {
    height: 112px;
    flex: none;
    box-sizing: border-box;
    display: flex;
    align-items: center;
    padding: 0 59px 0 46px;
    background: #fff;
    position: relative;
    z-index: 2;
    box-shadow: 0 2px 5px rgba(70, 80, 70, 0.28);
  }
  .avatar {
    width: 80px;
    height: 80px;
    border-radius: 50%;
    display: flex;
    align-items: center;
    justify-content: center;
    color: #fff;
    font-size: 32px;
    font-weight: 700;
    background: linear-gradient(#e7b0b1, #d16e74);
  }
  .who { margin-left: 20px; flex: 1; }
  .name { font-size: 33.500px; font-weight: 600; line-height: 42px; letter-spacing: 0.35px; color: #000; }
  .status { font-size: 28px; line-height: 36px; letter-spacing: 0.2px; color: #707579; }
  header svg { display: block; fill: none; stroke: #707579; stroke-width: 4; stroke-linecap: round; }
  .search { width: 40px; height: 40px; margin: 2px 62px 0 0; }
  .more { width: 10px; height: 40px; margin-top: 2px; }
  .more circle { fill: #707579; stroke: none; }

  main {
    position: relative;
    height: 1242px;
    flex: none;
    overflow: hidden;
    border-radius: 0 0 18px 0;
    box-shadow: 0 1px 0 #555;
  }
  .wallpaper { position: absolute; inset: 0; isolation: isolate; }
  .wallpaper::after {
    content: '';
    position: absolute;
    inset: auto 0 0;
    height: 50px;
    background: linear-gradient(transparent, rgba(60, 70, 60, 0.16));
  }
  .band { position: absolute; inset: 0; }
  .b0 { background: linear-gradient(90deg, #cdd7b5 0%, #cfd9b8 19%, #bdceb1 34%, #a0c19e 42%, #8fb798 52%, #7fab91 61%, #7da98e 80%, #7ba48c 100%); }
  .b1 { background: linear-gradient(90deg, #c3d2ac, #bbcfad 20%, #9fc09b 40%, #89b38f 60%, #7fac8a 80%, #87b18a); mask-image: linear-gradient(transparent, #000 20%); }
  .b2 { background: linear-gradient(90deg, #adc99e, #abc79f 20%, #a0c19a 40%, #8fb48e 60%, #97b98f 80%, #a3c08c); mask-image: linear-gradient(transparent 20%, #000 40%); }
  .b3 { background: linear-gradient(90deg, #9dbd90, #9fbe94 20%, #9ebf91 40%, #a4c192 60%, #b3c793 80%, #bfcc90); mask-image: linear-gradient(transparent 40%, #000 60%); }
  .b4 { background: linear-gradient(90deg, #95ba8a, #97ba8c 20%, #9dbe8f 40%, #bcca92 60%, #c9d294 80%, #d0d693); mask-image: linear-gradient(transparent 60%, #000 80%); }
  .b5 { background: linear-gradient(90deg, #8fb787, #92b889 20%, #9bbc8d 40%, #bbc98f 60%, #d0d693 80%, #d6d995); mask-image: linear-gradient(transparent 80%, #000); }
  .doodles {
    position: absolute;
    inset: 0;
    width: 100%;
    height: 100%;
    mix-blend-mode: soft-light;
    opacity: 0.38;
    fill: none;
    stroke: #002404;
    stroke-width: 2.3;
    stroke-linecap: round;
    stroke-linejoin: round;
  }
  .doodles path { vector-effect: non-scaling-stroke; }
  .doodles .dashed { stroke-dasharray: 8 7; }
  .doodles text { font: 300 43px Lato, sans-serif; fill: #002404; stroke: none; text-anchor: middle; }

  .list {
    position: relative;
    height: 1074px;
    overflow: hidden;
    padding: 0 392px 0 396px;
    display: flex;
    flex-direction: column;
    gap: 20px;
    box-sizing: border-box;
  }
  .previous {
    width: 904px;
    height: 4px;
    flex: none;
    margin-left: -14px;
    background: #f0f0f0;
    border-radius: 0 0 16px 2px;
    box-shadow: 0 2px 3px rgba(60, 90, 60, 0.25);
  }
  .row { display: flex; flex-direction: column; flex: none; align-items: flex-start; }
  .row.out { align-items: flex-end; }
  .bubble {
    position: relative;
    box-sizing: border-box;
    display: grid;
    padding: 11px 15px 11px 16px;
    border-radius: 24px 24px 24px 0;
    background: #fff;
    filter: drop-shadow(0 2px 1.500px rgba(60, 90, 60, 0.25));
  }
  .out .bubble { background: #e1f6ca; border-radius: 24px 24px 0 24px; padding-right: 10px; }
  .bubble.with-action { border-bottom-right-radius: 11px; }
  .bubble.clipped { padding-bottom: 60px; }
  .w-ok { width: 225px; }
  .w-alright { width: 523px; }
  .w-side { width: 500px; }
  .w-mean { width: 850px; }
  .w-wide { width: 928px; }
  .w-pregnant { width: 960px; height: 99px; }
  .text {
    grid-area: 1 / 1;
    font-size: 29px;
    line-height: 39.375px;
    letter-spacing: -0.06px;
    color: #000;
    white-space: nowrap;
  }
  .meta {
    grid-area: 1 / 1;
    align-self: end;
    justify-self: end;
    display: flex;
    align-items: center;
    gap: 3px;
    height: 28px;
    margin-bottom: -4.500px;
    font-size: 23.500px;
    color: #909497;
    white-space: nowrap;
  }
  .out .meta { color: #62ac58; }
  .w-pregnant .meta { margin-bottom: -7px; }
  .ticks { width: 34px; height: 20px; margin-top: 1px; fill: none; stroke: #5dad58; stroke-width: 2.400; stroke-linecap: round; stroke-linejoin: round; }
  .tail { position: absolute; left: -14px; bottom: 0; width: 16px; height: 40px; fill: #fff; }
  .out .tail { left: auto; right: -14px; fill: #e1f6ca; transform: scaleX(-1); }
  .action {
    width: 850px;
    height: 72px;
    margin-top: 8px;
    display: flex;
    align-items: center;
    justify-content: center;
    border-radius: 11px 11px 24px 24px;
    background: rgba(86, 138, 64, 0.6);
    color: #fff;
    font-size: 28px;
    font-weight: 500;
    white-space: nowrap;
    letter-spacing: -0.11px;
  }
  .divider {
    position: relative;
    height: 2px;
    margin: -2px 361px 0;
    background: linear-gradient(90deg, transparent, rgba(255, 255, 255, 0.45) 3%, rgba(255, 255, 255, 0.45) 97%, transparent);
  }
  .composer { position: relative; display: flex; gap: 16px; padding: 16px 0 0 390px; }
  .field {
    position: relative;
    box-sizing: border-box;
    width: 1246px;
    height: 112px;
    display: flex;
    align-items: center;
    padding: 2px 36px 0 34px;
    border-radius: 24px 24px 0 24px;
    background: linear-gradient(#fff 80%, #f9f9fa);
    box-shadow: 0 2px 4px rgba(60, 90, 60, 0.2);
  }
  .field .tail { left: auto; right: -14px; fill: #fbfbfb; transform: scaleX(-1); }
  .placeholder { flex: 1; margin-left: 34px; font-size: 29px; letter-spacing: -0.2px; color: #a2acb4; }
  .smile { width: 44px; height: 44px; fill: #8b9094; }
  .line { fill: none; stroke: #8b9094; stroke-width: 4; stroke-linecap: round; }
  .clip { width: 40px; height: 44px; fill: none; stroke: #8b9094; stroke-width: 3.800; stroke-linecap: round; }
  .round {
    width: 112px;
    height: 112px;
    border-radius: 50%;
    display: flex;
    align-items: center;
    justify-content: center;
    background: #fff;
    box-shadow: 0 2px 4px rgba(60, 90, 60, 0.2);
  }
  .round svg { fill: none; stroke: #8b9094; stroke-width: 4; stroke-linecap: round; stroke-linejoin: round; }
  .mic { width: 36px; height: 46px; }
  .down { width: 40px; height: 40px; }
  .jump { position: absolute; left: 2012px; top: 938px; }
  .tooltip {
    position: absolute;
    left: 0;
    top: 1172px;
    box-sizing: border-box;
    width: 174px;
    height: 52px;
    padding-left: 26px;
    border-radius: 6px;
    background: #bcd5b0;
    color: #0d160a;
    font-size: 27.500px;
    letter-spacing: -0.35px;
    line-height: 51px;
    filter: drop-shadow(0 0 3px rgba(20, 40, 20, 0.5));
  }
  .tooltip svg { position: absolute; left: 72px; top: 52px; width: 32px; height: 17px; fill: #bcd5b0; }
  .dock { flex: 1; background: linear-gradient(90deg, #777475 0 38px, #858384 38px 526px, #757373 526px 528px, #848283 528px 1016px, #747273 1016px 1018px, #848384 1018px 97%, #a5a4a6); border-top: 1px solid #5a5858; }
</style>
